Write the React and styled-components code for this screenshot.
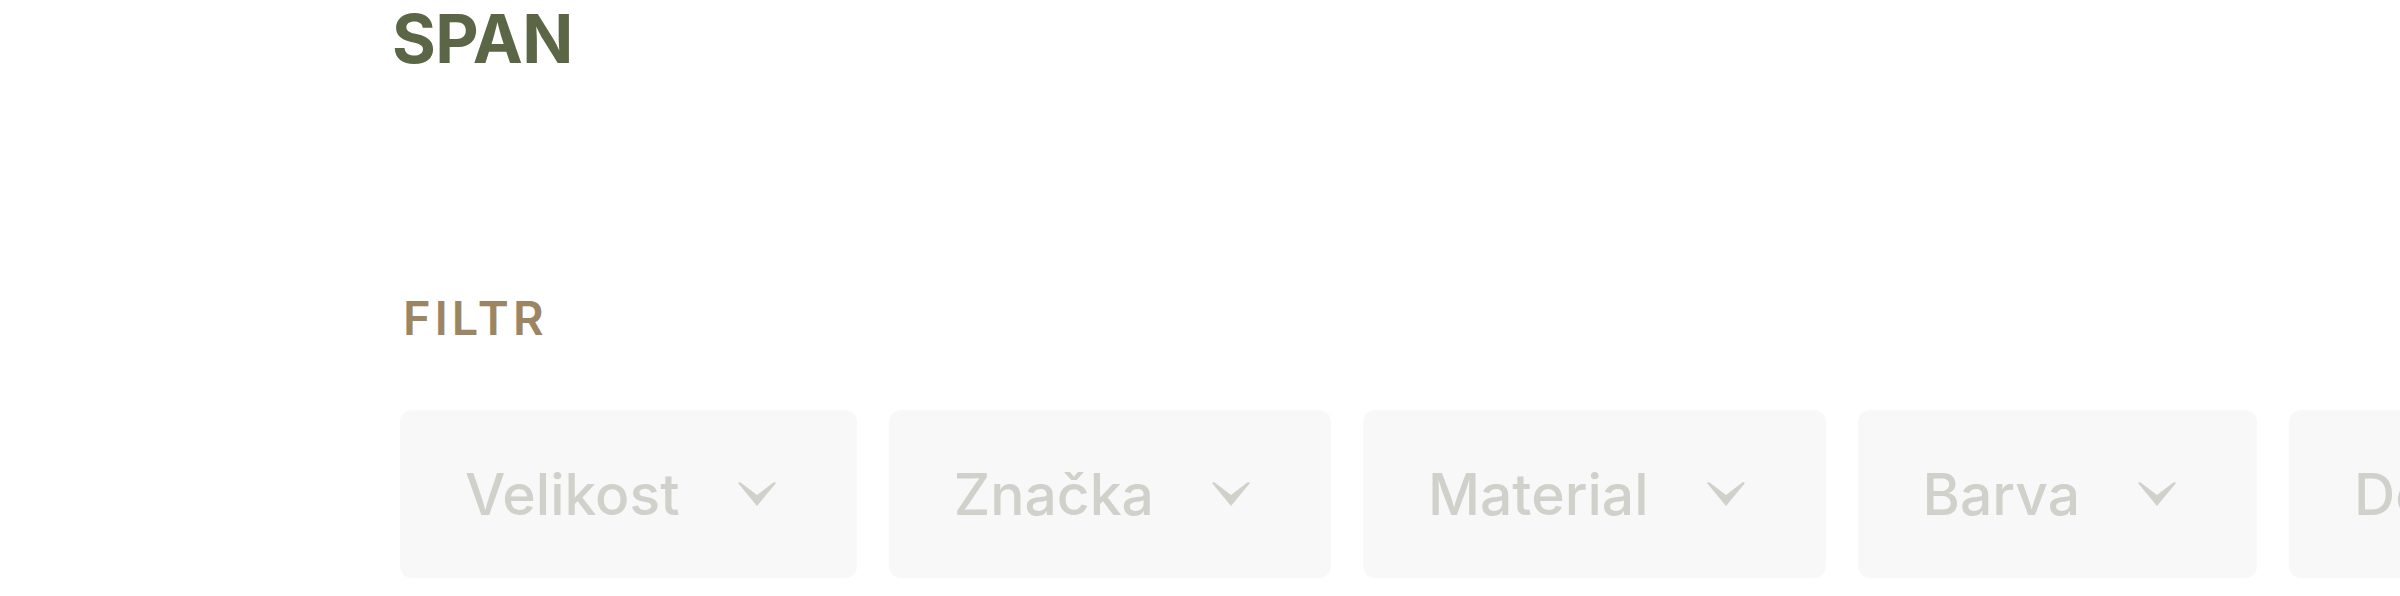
import React from 'react';
import styled, { createGlobalStyle } from 'styled-components';

const GlobalStyle = createGlobalStyle`
  html, body {
    margin: 0;
    padding: 0;
    background: #ffffff;
    overflow: hidden;
  }
  body {
    font-family: Inter, "Noto Sans", "Liberation Sans", sans-serif;
  }
`;

const Page = styled.div`
  padding: 5px 0 0 400px;
  width: 2400px;
  box-sizing: border-box;
`;

const Brand = styled.div`
  margin-left: -8px;
  font-size: 67px;
  line-height: 1;
  font-weight: 700;
  color: #5b6646;
  letter-spacing: -0.5px;
`;

const Section = styled.section`
  margin-top: 222px;
`;

const SectionTitle = styled.h2`
  margin: 0 0 0 3px;
  font-size: 47px;
  line-height: 1;
  font-weight: 600;
  letter-spacing: 4px;
  color: #9c8563;
`;

const FilterRow = styled.div`
  display: flex;
  gap: 32px;
  margin-top: 69px;
  white-space: nowrap;
`;

const FilterButton = styled.button`
  flex: none;
  display: flex;
  align-items: center;
  height: 168px;
  padding: 0 81px 0 65px;
  border: none;
  border-radius: 12px;
  background: #f8f8f8;
  font-family: inherit;
  cursor: pointer;
`;

const Label = styled.span`
  font-size: 57px;
  line-height: 1;
  font-weight: 500;
  color: #d0d1cb;
`;

const Chevron = styled.svg`
  width: 38px;
  height: 24px;
  margin-left: 58px;
  fill: #d0d1cb;
`;

const filters = ['Velikost', 'Značka', 'Material', 'Barva', 'Dostupnost'];

const ChevronIcon = () => (
  <Chevron viewBox="0 0 38 24">
    <path d="M0 1 L2 0 L19 13 L36 0 L38 1 L19 24 Z" />
  </Chevron>
);

export default function App() {
  return (
    <>
      <GlobalStyle />
      <Page>
        <Brand>SPAN</Brand>
        <Section>
          <SectionTitle>FILTR</SectionTitle>
          <FilterRow>
            {filters.map((name) => (
              <FilterButton key={name}>
                <Label>{name}</Label>
                <ChevronIcon />
              </FilterButton>
            ))}
          </FilterRow>
        </Section>
      </Page>
    </>
  );
}
